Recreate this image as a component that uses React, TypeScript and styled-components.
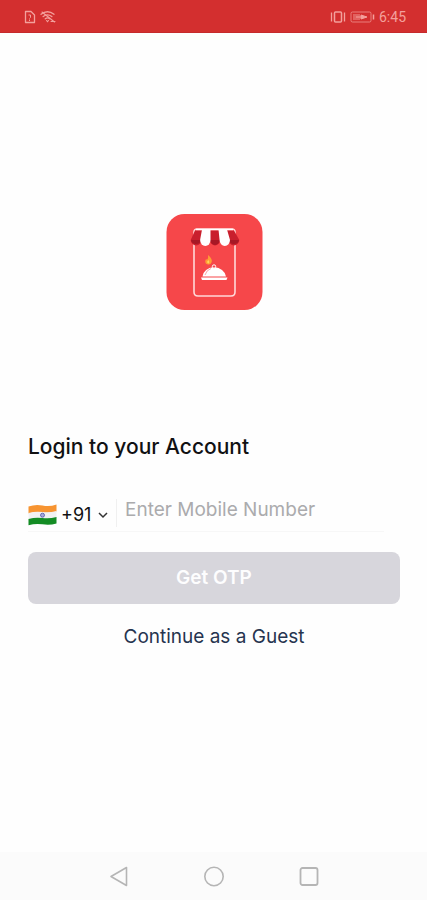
import React, { useState } from "react";
import styled, { createGlobalStyle } from "styled-components";

const GlobalStyle = createGlobalStyle`
  *, *::before, *::after { box-sizing: border-box; }
  body {
    margin: 0;
    background: #fefefe;
    color: #111113;
    font-family: Inter, Roboto, sans-serif;
  }
  button, input, select { font: inherit; }
`;

const Screen = styled.div`
  display: flex;
  flex-direction: column;
  min-height: 100vh;
`;

const StatusBar = styled.header`
  display: flex;
  align-items: center;
  justify-content: space-between;
  height: 33px;
  padding: 1px 21px 0 24px;
  background: #d32f2f;
  border-bottom: 1px solid #c62a2c;
  color: #f3a09c;
`;

const StatusGroup = styled.div`
  display: flex;
  align-items: center;
  gap: 4px;
`;

const Clock = styled.time`
  font-family: Roboto, sans-serif;
  font-size: 14px;
  line-height: 16px;
`;

const Content = styled.main`
  flex: 1;
  display: flex;
  flex-direction: column;
  padding: 0 27px 0 28px;
`;

const Hero = styled.div`
  display: flex;
  justify-content: center;
  padding: 181px 0 120px;
`;

const Form = styled.form`
  display: flex;
  flex-direction: column;
`;

const Title = styled.h1`
  margin: 0;
  font-size: 21px;
  line-height: 32px;
  font-weight: 500;
`;

const PhoneRow = styled.div`
  display: flex;
  align-items: center;
  height: 37px;
  margin: 32px 16px 20px 0;
  border-bottom: 1px solid #f7f7f7;
`;

const Country = styled.label`
  display: flex;
  align-items: center;
  gap: 4px;
  padding: 4px 7px 0 0;
`;

const CodeSelect = styled.select`
  appearance: none;
  width: 32px;
  padding: 0;
  border: 0;
  background: transparent;
  color: #111113;
  font-size: 18px;
  line-height: 24px;
`;

const PhoneInput = styled.input`
  flex: 1;
  min-width: 0;
  height: 28px;
  padding: 0 8px 8px;
  border: 0;
  border-left: 1px solid #f0f0f0;
  outline: 0;
  background: transparent;
  color: #111113;
  font-size: 19px;
  &::placeholder { color: #ababad; opacity: 1; }
`;

const SubmitButton = styled.button`
  height: 52px;
  border: 0;
  border-radius: 8px;
  background: #d7d6dc;
  color: #fdfdfe;
  font-size: 19px;
  line-height: 24px;
  font-weight: 600;
`;

const GuestLink = styled.a`
  align-self: center;
  margin-top: 21px;
  color: #26344f;
  font-size: 19px;
  line-height: 24px;
  text-decoration: none;
`;

const NavBar = styled.nav`
  display: flex;
  align-items: center;
  justify-content: center;
  gap: 71px;
  height: 48px;
  background: #fbfbfb;
`;

const NavButton = styled.button`
  display: flex;
  padding: 0;
  border: 0;
  background: transparent;
  color: #b5b5b5;
`;

const SimIcon = () => (
  <svg width="12" height="14" viewBox="0 0 12 14" fill="none" stroke="currentColor" aria-hidden="true">
    <path d="M1.500 1.500h5.500l3.500 3.500v7.500h-9z" strokeWidth="1.300" strokeLinejoin="round" />
    <path d="M4.500 5h2v2.500l-1 1M5.500 9.500v1.500" />
  </svg>
);

const WifiIcon = () => (
  <svg width="16" height="14" viewBox="0 0 16 14" fill="none" stroke="currentColor" strokeLinecap="round" aria-hidden="true">
    <path d="M1 4.200q6.500-4.800 13 0M3.200 6.500q4.300-3.200 8.600 0M5.300 8.700q2.200-1.700 4.400 0" strokeWidth="1.400" />
    <path d="M6.500 10.500l1 1.200 1-1.200M2 2l12.500 10M11 11.500h4" strokeWidth="1.100" />
  </svg>
);

const VibrateIcon = () => (
  <svg width="16" height="12" viewBox="0 0 16 12" fill="none" stroke="currentColor" aria-hidden="true">
    <rect x="4.500" y="1" width="7" height="10" rx="1" strokeWidth="1.500" />
    <path d="M1.500 1.500v9M14.500 1.500v9" strokeWidth="1.300" />
  </svg>
);

const BatteryIcon = () => (
  <svg width="25" height="12" viewBox="0 0 25 12" fill="none" stroke="currentColor" aria-hidden="true">
    <rect x="1" y="1" width="20" height="10" rx="1.500" opacity=".7" />
    <rect x="3" y="3" width="7" height="6" fill="currentColor" stroke="none" opacity=".45" />
    <path d="M6 6h5V4l6 2-6 2V6" fill="currentColor" />
    <path d="M23.500 3.500v5" strokeWidth="1.500" />
  </svg>
);

const Logo = () => (
  <svg width="97" height="97" viewBox="0 0 97 97" role="img" aria-label="Food ordering">
    <rect x=".5" y="0" width="96" height="96" rx="18" fill="#f6474a" />
    <path d="M28 28V18q0-3 3-3h35q3 0 3 3v60q0 4-4 4H32q-4 0-4-4V28" fill="none" stroke="#ffd8d8" strokeWidth="1.600" />
    <path d="M29 16.500h8L35.500 26a5.400 5.400 0 0 1-10.800 0z" fill="#c91f2d" />
    <path d="M60 16.500h8L73.300 26a5.400 5.400 0 0 1-10.800 0z" fill="#c91f2d" />
    <path d="M44 16.500h9L54 26a5 5.400 0 0 1-10 0z" fill="#c91f2d" />
    <path d="M25 26h10a5.100 5 0 0 1-10 0zM44.300 26h9.400a4.700 5 0 0 1-9.400 0zM63 26h10a5.100 5 0 0 1-10 0z" fill="#a71825" />
    <path d="M36 15.500h8.500V26a5.200 6 0 0 1-10.400 0z" fill="#fff" />
    <path d="M52.500 15.500H61L64 26a5.200 6 0 0 1-10.400 0z" fill="#fff" />
    <path d="M30 15.500h37" stroke="#fff" strokeWidth="1.400" />
    <path d="M36.500 62.500q1.500-8.500 11.500-9.500 10 1 12 9.500z" fill="#fff" />
    <circle cx="48" cy="52.500" r="1.700" fill="#f6474a" stroke="#fff" />
    <path d="M39 61q1.500-5 6-6.500" fill="none" stroke="#f9a7aa" />
    <path d="M35 63.500h26.500l-1 2.500H36z" fill="#fff" />
    <path d="M42 41q5 4 3.500 7.500-1 2.500-3.500 2-3-.5-2.700-3.500.2-1.200 1-2.200l.5 1.500Q42.800 44 42 41z" fill="#ff9c35" />
    <path d="M42.500 46q1.500 2 .3 3.500-2-.2-1.600-2z" fill="#ffd45c" />
  </svg>
);

const IndiaFlag = () => (
  <svg width="29" height="22" viewBox="0 0 29 22" role="img" aria-label="India">
    <path d="M.5 2.500q7-2.500 14-1t14-1V7.500q-7 2-14 1t-14 1z" fill="#f79431" />
    <path d="M.5 9q7-2 14-1t14-1v7q-7 2-14 1t-14 1z" fill="#f1f1f3" />
    <path d="M.5 15q7-2 14-1t14-1v6.500q-7 2-14 .8t-14 1z" fill="#138c24" />
    <circle cx="14.500" cy="11.200" r="2" fill="#a6a9da" stroke="#5355a8" strokeWidth=".8" />
  </svg>
);

const ChevronIcon = () => (
  <svg width="12" height="8" viewBox="0 0 12 8" fill="none" stroke="#333" strokeWidth="1.500" aria-hidden="true">
    <path d="M2 2l4 4 4-4" />
  </svg>
);

const BackIcon = () => (
  <svg width="24" height="24" viewBox="0 0 24 24" fill="none" stroke="currentColor" strokeWidth="1.600" strokeLinejoin="round" aria-hidden="true">
    <path d="M19.500 3.500v18L4 12.500z" />
  </svg>
);

const HomeIcon = () => (
  <svg width="24" height="24" viewBox="0 0 24 24" fill="none" stroke="currentColor" strokeWidth="1.600" aria-hidden="true">
    <circle cx="12" cy="12.500" r="9.200" />
  </svg>
);

const RecentIcon = () => (
  <svg width="24" height="24" viewBox="0 0 24 24" fill="none" stroke="currentColor" strokeWidth="1.800" aria-hidden="true">
    <rect x="3.500" y="4" width="17" height="17" rx="2" />
  </svg>
);

export default function App() {
  const [phone, setPhone] = useState("");

  return (
    <>
      <GlobalStyle />
      <Screen>
        <StatusBar>
          <StatusGroup>
            <SimIcon />
            <WifiIcon />
          </StatusGroup>
          <StatusGroup>
            <VibrateIcon />
            <BatteryIcon />
            <Clock>6:45</Clock>
          </StatusGroup>
        </StatusBar>
        <Content>
          <Hero>
            <Logo />
          </Hero>
          <Form onSubmit={(event) => event.preventDefault()}>
            <Title>Login to your Account</Title>
            <PhoneRow>
              <Country>
                <IndiaFlag />
                <CodeSelect aria-label="Country code" defaultValue="+91">
                  <option value="+91">+91</option>
                </CodeSelect>
                <ChevronIcon />
              </Country>
              <PhoneInput
                type="tel"
                aria-label="Mobile number"
                placeholder="Enter Mobile Number"
                value={phone}
                onChange={(event) => setPhone(event.target.value)}
              />
            </PhoneRow>
            <SubmitButton type="submit">Get OTP</SubmitButton>
            <GuestLink href="#guest">Continue as a Guest</GuestLink>
          </Form>
        </Content>
        <NavBar aria-label="System">
          <NavButton type="button" aria-label="Back"><BackIcon /></NavButton>
          <NavButton type="button" aria-label="Home"><HomeIcon /></NavButton>
          <NavButton type="button" aria-label="Recent apps"><RecentIcon /></NavButton>
        </NavBar>
      </Screen>
    </>
  );
}
